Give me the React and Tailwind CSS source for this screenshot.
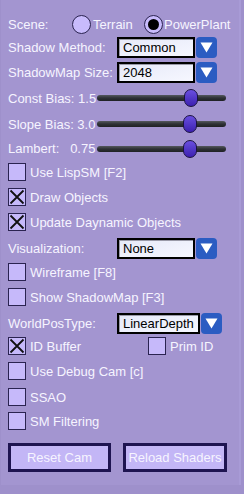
import React from 'react'

const font = { fontFamily: '"Liberation Sans", Arial, sans-serif' }

function Check({ checked }) {
  return (
    <span className="w-[18px] h-[18px] shrink-0 border-[1.5px] border-[#2a2350] bg-[#c6b9fa] flex items-center justify-center">
      {checked && (
        <svg width="16" height="16" viewBox="0 0 16 16">
          <path d="M1.5 1.5 L14.5 14.5 M14.5 1.5 L1.5 14.5" stroke="#111" strokeWidth="1.8" />
        </svg>
      )}
    </span>
  )
}

function CheckRow({ label, checked, h }) {
  return (
    <div className={`flex items-center ${h}`}>
      <Check checked={checked} />
      <span className="ml-[4px]">{label}</span>
    </div>
  )
}

function Radio({ on }) {
  return (
    <span className="w-[19px] h-[19px] rounded-full border-[1.5px] border-[#2a2350] bg-[#c8bbfc] flex items-center justify-center shrink-0">
      {on && <span className="w-[11px] h-[11px] rounded-full bg-black" />}
    </span>
  )
}

function Dropdown({ label, value, h, boxW = 'w-[78px]' }) {
  return (
    <div className={`flex items-center ${h}`}>
      <span className="w-[109px]">{label}</span>
      <div className={`${boxW} h-[21px] border-2 border-black bg-gradient-to-br from-[#e6e9f8] to-[#f6f7ff] text-black flex items-center pl-[4px] shadow-[inset_1px_1px_0_#9a9aa8]`}>
        {value}
      </div>
      <div className="w-[21px] h-[21px] ml-[1px] rounded-[4px] bg-[#2b5cc2] flex items-center justify-center">
        <svg width="13" height="11" viewBox="0 0 13 11">
          <path d="M0.5 0.5 H12.5 L6.5 10.5 Z" fill="#ffffff" />
        </svg>
      </div>
    </div>
  )
}

function Slider({ label, pos, h }) {
  return (
    <div className={`flex items-center ${h}`}>
      <span className="w-[89px] whitespace-pre">{label}</span>
      <div className="relative w-[129px] h-[6px] rounded-full bg-gradient-to-b from-[#55595e] via-[#2e3135] to-[#1f2124]">
        <span
          className="absolute top-[-6px] w-[14px] h-[18px] rounded-full border border-[#1a1240] bg-gradient-to-b from-[#6a4ee0] to-[#3d1fb0]"
          style={{ left: pos }}
        />
      </div>
    </div>
  )
}

export default function App() {
  return (
    <div className="w-[244px] h-[494px] bg-[#9e90cb] text-[13px] text-[#f6f4ff] leading-none" style={font}>
      <div className="h-[485px] ml-[1px] mr-[3px] bg-[#a395d0] border-r-2 border-[#a89bd6] pl-[7px] pt-[12px] flex flex-col">
        <div className="flex items-center h-[24px]">
          <span className="w-[64px]">Scene:</span>
          <Radio />
          <span className="ml-[2px] w-[51px]">Terrain</span>
          <Radio on />
          <span className="ml-[1px]">PowerPlant</span>
        </div>
        <Dropdown label="Shadow Method:" value="Common" h="h-[23px]" />
        <Dropdown label="ShadowMap Size:" value="2048" h="h-[26px]" />
        <Slider label="Const Bias: 1.5" pos={87} h="h-[26px]" />
        <Slider label="Slope Bias: 3.0" pos={86} h="h-[26px]" />
        <Slider label="Lambert:   0.75" pos={86} h="h-[23px]" />
        <CheckRow label="Use LispSM [F2]" h="h-[24px]" />
        <CheckRow label="Draw Objects" checked h="h-[26px]" />
        <CheckRow label="Update Daynamic Objects" checked h="h-[24px]" />
        <Dropdown label="Visualization:" value="None" h="h-[28px]" />
        <CheckRow label="Wireframe [F8]" h="h-[20px]" />
        <CheckRow label="Show ShadowMap [F3]" h="h-[30px]" />
        <Dropdown label="WorldPosType:" value="LinearDepth" h="h-[22px]" boxW="w-[83px]" />
        <div className="flex items-center h-[24px]">
          <Check checked />
          <span className="ml-[4px] w-[118px]">ID Buffer</span>
          <Check />
          <span className="ml-[4px]">Prim ID</span>
        </div>
        <CheckRow label="Use Debug Cam [c]" h="h-[26px]" />
        <CheckRow label="SSAO" h="h-[26px]" />
        <CheckRow label="SM Filtering" h="h-[22px]" />
        <div className="flex gap-[12px] mt-[11px]">
          <button className="w-[103px] h-[29px] border-[3px] border-[#1e1450] bg-[#c3b6f6] text-[#f6f4ff]">Reset Cam</button>
          <button className="w-[104px] h-[29px] border-[3px] border-[#1e1450] bg-[#c3b6f6] text-[#f6f4ff]">Reload Shaders</button>
        </div>
      </div>
    </div>
  )
}
